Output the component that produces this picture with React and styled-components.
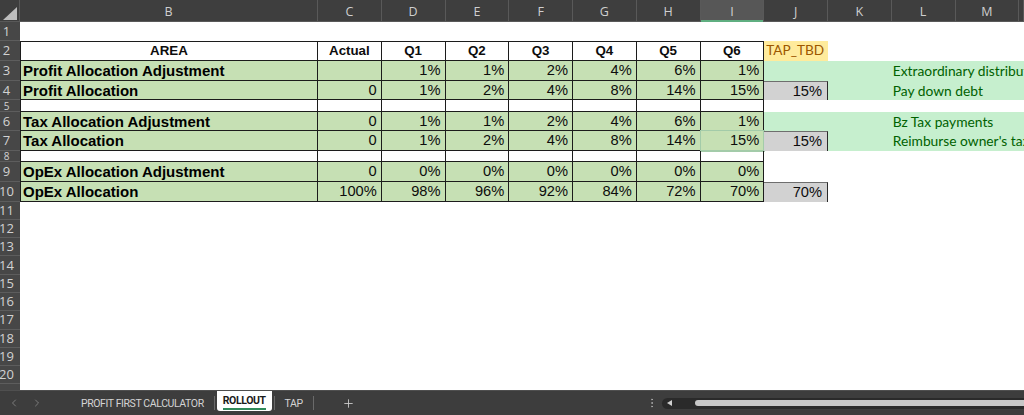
import React from "react";
import styled, { createGlobalStyle, css } from "styled-components";
import { ChevronLeft, ChevronRight, EllipsisVertical, Plus } from "lucide-react";

const GlobalStyle = createGlobalStyle`
  html, body { margin: 0; padding: 0; background: #ffffff; }
  body { width: 1024px; height: 415px; overflow: hidden; }
  #root { width: 1024px; height: 415px; }
  * { box-sizing: border-box; }
`;

const ROW_HEIGHTS = [19, 20, 20, 19, 12, 19, 20, 11, 20, 19.5, ...Array(10).fill(18.3), 24];
const COL_LETTERS = ["B", "C", "D", "E", "F", "G", "H", "I", "J", "K", "L", "M", ""];

const TABLE_GREEN = "#c6e0b4";
const LINE = "#1c1c1c";

const Window = styled.div`
  width: 1024px;
  height: 415px;
  display: flex;
  flex-direction: column;
  overflow: hidden;
  background: #ffffff;
`;

const Sheet = styled.div`
  flex: 1 1 auto;
  min-height: 0;
  overflow: hidden;
  display: grid;
  grid-template-columns: 20px 298px repeat(11, 63.75px) minmax(0, 1fr);
  grid-template-rows: 22px ${ROW_HEIGHTS.map((h) => `${h}px`).join(" ")};
  align-content: start;
`;

const Corner = styled.div`
  background: #3e3e3e;
  border-right: 1px solid #595959;
  box-shadow: inset 0 -1px 0 #595959;
  display: flex;
  align-items: flex-end;
  justify-content: flex-end;
  padding: 0 2px 2px 0;
`;

const ColHead = styled.div`
  display: flex;
  align-items: center;
  justify-content: center;
  padding-top: 3px;
  background: ${(p) => (p.$active ? "#575757" : "#3e3e3e")};
  color: #cfcfcf;
  font: 400 12.5px/1 "Open Sans", "Noto Sans", sans-serif;
  border-right: 1px solid #595959;
  box-shadow: ${(p) => (p.$active ? "inset 0 -2px 0 #5fae80" : "inset 0 -1px 0 #595959")};
`;

const RowHead = styled.div`
  display: flex;
  align-items: center;
  justify-content: center;
  padding-right: 7px;
  overflow: hidden;
  background: #474747;
  color: #d2d2d2;
  font: 400 13px/1 "Open Sans", "Noto Sans", sans-serif;
  border-bottom: 1px solid #5d5d5d;
  ${(p) =>
    p.$short &&
    css`
      font-size: 10px;
      line-height: 10px;
    `}
`;

const Cell = styled.div`
  display: flex;
  align-items: center;
  min-width: 0;
  overflow: hidden;
  white-space: nowrap;
  padding: 0 3px;
  font-family: "Liberation Sans", Arial, sans-serif;
  font-size: 14.67px;
  line-height: 1;
  color: #0d0d0d;
  background: ${(p) => p.$fill || "transparent"};
  ${(p) => p.$span && css`grid-column: ${p.$span};`}
`;

const TableCell = styled(Cell)`
  border-right: 1px solid ${LINE};
  border-bottom: 1px solid ${LINE};
  ${(p) => p.$first && css`border-left: 1px solid ${LINE};`}
  ${(p) => p.$top && css`border-top: 1px solid ${LINE};`}
  ${(p) =>
    p.$selected &&
    css`
      outline: 1px solid #a3cba9;
      border-right-color: #a3cba9;
      border-bottom-color: #a3cba9;
    `}
`;

const HeadCell = styled(TableCell)`
  justify-content: center;
  font-weight: 700;
  font-size: 13.33px;
`;

const LabelCell = styled(TableCell)`
  justify-content: flex-start;
  padding-left: 2px;
  font-weight: 700;
  font-size: 15px;
  color: #000;
`;

const NumCell = styled(TableCell)`
  justify-content: flex-end;
  padding-right: 4px;
`;

const TbdCell = styled(Cell)`
  background: #ffeb9c;
  color: #9c5700;
  font-family: Lato, "Open Sans", sans-serif;
  font-size: 13.6px;
  padding-left: 2px;
`;

const NoteCell = styled(Cell)`
  background: #c6efce;
  color: #006100;
  font-family: Lato, "Open Sans", sans-serif;
  font-size: 13.8px;
  padding-left: 1px;
`;

const CalcCell = styled(Cell)`
  background: #d2d2d2;
  justify-content: flex-end;
  padding-right: 5px;
  border-right: 1px solid #2a2a2a;
  border-top: 1px solid #6e6e6e;
`;

const Empty = styled.div`
  grid-column: ${(p) => p.$span || "auto"};
  background: transparent;
`;

const TabBar = styled.div`
  flex: 0 0 25px;
  display: flex;
  align-items: center;
  background: #3d3d3d;
  border-top: 1px solid #4f4f4f;
  font-family: Roboto, "Open Sans", sans-serif;
`;

const NavButtons = styled.div`
  width: 71px;
  height: 100%;
  display: flex;
  align-items: center;
  padding-left: 2px;
  color: #8a8a8a;
`;

const NavArrow = styled.span`
  width: 23px;
  display: flex;
  justify-content: center;
`;

const Tab = styled.div`
  height: 100%;
  display: flex;
  align-items: center;
  padding: 0 10px;
  font-size: 10.5px;
  letter-spacing: -0.4px;
  color: #d4d4d4;
  white-space: nowrap;
  ${(p) =>
    p.$active &&
    css`
      align-self: flex-start;
      height: 20px;
      margin: 0 2px;
      padding: 0 6px;
      background: #ffffff;
      color: #1a1a1a;
      font-weight: 700;
      border-radius: 0 0 3px 3px;
    `}
`;

const TabLabel = styled.span`
  padding: 2px 0 1px;
  ${(p) => p.$active && css`border-bottom: 2px solid #2f8a5a;`}
`;

const Separator = styled.span`
  width: 1px;
  height: 14px;
  background: #6a6a6a;
`;

const AddSheet = styled.span`
  margin-left: 28px;
  display: flex;
  color: #d0d0d0;
`;

const Spacer = styled.div`
  flex: 1;
`;

const Dots = styled.span`
  width: 12px;
  margin-right: 4px;
  display: flex;
  justify-content: center;
  color: #a8a8a8;
`;

const ScrollTrack = styled.div`
  width: 362px;
  height: 11px;
  border-radius: 6px 0 0 6px;
  background: #2a2a2a;
  display: flex;
  align-items: center;
  padding-left: 5px;
`;

const ScrollArrow = styled.span`
  width: 0;
  height: 0;
  border-top: 3.5px solid transparent;
  border-bottom: 3.5px solid transparent;
  border-right: 5px solid #cfcfcf;
`;

const ScrollThumb = styled.div`
  margin-left: 23px;
  flex: 1;
  height: 6px;
  border-radius: 3px 0 0 3px;
  background: #c7c7c7;
`;

const QUARTERS = ["Q1", "Q2", "Q3", "Q4", "Q5", "Q6"];

const DATA = {
  3: {
    label: "Profit Allocation Adjustment",
    actual: "",
    q: ["1%", "1%", "2%", "4%", "6%", "1%"],
    j: "note",
    note: "Extraordinary distributions",
  },
  4: {
    label: "Profit Allocation",
    actual: "0",
    q: ["1%", "2%", "4%", "8%", "14%", "15%"],
    j: "calc",
    jv: "15%",
    note: "Pay down debt",
  },
  5: { blank: true },
  6: {
    label: "Tax Allocation Adjustment",
    actual: "0",
    q: ["1%", "1%", "2%", "4%", "6%", "1%"],
    j: "note",
    note: "Bz Tax payments",
  },
  7: {
    label: "Tax Allocation",
    actual: "0",
    q: ["1%", "2%", "4%", "8%", "14%", "15%"],
    j: "calc",
    jv: "15%",
    note: "Reimburse owner's taxes",
    selected: 5,
  },
  8: { blank: true },
  9: {
    label: "OpEx Allocation Adjustment",
    actual: "0",
    q: ["0%", "0%", "0%", "0%", "0%", "0%"],
    j: "none",
  },
  10: {
    label: "OpEx Allocation",
    actual: "100%",
    q: ["98%", "96%", "92%", "84%", "72%", "70%"],
    j: "calc",
    jv: "70%",
  },
};

function renderRow(r, height) {
  const cells = [
    <RowHead key={`h${r}`} $short={height < 15}>
      {r}
    </RowHead>,
  ];

  if (r === 1 || r > 10) {
    cells.push(<Empty key={`e${r}`} $span="2 / -1" />);
    return cells;
  }

  if (r === 2) {
    cells.push(
      <HeadCell key="b2" $first $top>AREA</HeadCell>,
      <HeadCell key="c2" $top>Actual</HeadCell>,
      ...QUARTERS.map((q) => (
        <HeadCell key={q} $top>{q}</HeadCell>
      )),
      <TbdCell key="j2">TAP_TBD</TbdCell>,
      <Empty key="rest2" $span="11 / -1" />
    );
    return cells;
  }

  const row = DATA[r];
  if (row.blank) {
    cells.push(
      <TableCell key={`b${r}`} $first />,
      ...Array.from({ length: 7 }, (_, i) => <TableCell key={`x${r}${i}`} />),
      <Empty key={`rest${r}`} $span="10 / -1" />
    );
    return cells;
  }

  cells.push(
    <LabelCell key={`b${r}`} $first $fill={TABLE_GREEN}>
      {row.label}
    </LabelCell>,
    <NumCell key={`c${r}`} $fill={TABLE_GREEN}>
      {row.actual}
    </NumCell>,
    ...row.q.map((v, i) => (
      <NumCell key={`q${r}${i}`} $fill={TABLE_GREEN} $selected={row.selected === i}>
        {v}
      </NumCell>
    ))
  );

  if (row.j === "none") {
    cells.push(<Empty key={`rest${r}`} $span="10 / -1" />);
  } else if (row.j === "calc" && !row.note) {
    cells.push(
      <CalcCell key={`j${r}`}>{row.jv}</CalcCell>,
      <Empty key={`rest${r}`} $span="11 / -1" />
    );
  } else {
    cells.push(
      row.j === "calc" ? (
        <CalcCell key={`j${r}`}>{row.jv}</CalcCell>
      ) : (
        <NoteCell key={`j${r}`} />
      ),
      <NoteCell key={`k${r}`} />,
      <NoteCell key={`l${r}`} $span="12 / -1">
        {row.note}
      </NoteCell>
    );
  }
  return cells;
}

export default function App() {
  return (
    <Window>
      <GlobalStyle />
      <Sheet>
        <Corner>
          <svg width="14" height="13" viewBox="0 0 14 13">
            <polygon points="14,0 14,13 0,13" fill="#bdbdbd" />
          </svg>
        </Corner>
        {COL_LETTERS.map((c, i) => (
          <ColHead key={`col${i}`} $active={c === "I"}>
            {c}
          </ColHead>
        ))}
        {ROW_HEIGHTS.map((h, i) => renderRow(i + 1, h))}
      </Sheet>
      <TabBar>
        <NavButtons>
          <NavArrow>
            <ChevronLeft size={12} strokeWidth={1.6} />
          </NavArrow>
          <NavArrow>
            <ChevronRight size={12} strokeWidth={1.6} />
          </NavArrow>
        </NavButtons>
        <Tab>
          <TabLabel>PROFIT FIRST CALCULATOR</TabLabel>
        </Tab>
        <Separator />
        <Tab $active>
          <TabLabel $active>ROLLOUT</TabLabel>
        </Tab>
        <Separator />
        <Tab>
          <TabLabel>TAP</TabLabel>
        </Tab>
        <Separator />
        <AddSheet>
          <Plus size={13} strokeWidth={1.6} />
        </AddSheet>
        <Spacer />
        <Dots>
          <EllipsisVertical size={12} strokeWidth={2} />
        </Dots>
        <ScrollTrack>
          <ScrollArrow />
          <ScrollThumb />
        </ScrollTrack>
      </TabBar>
    </Window>
  );
}
